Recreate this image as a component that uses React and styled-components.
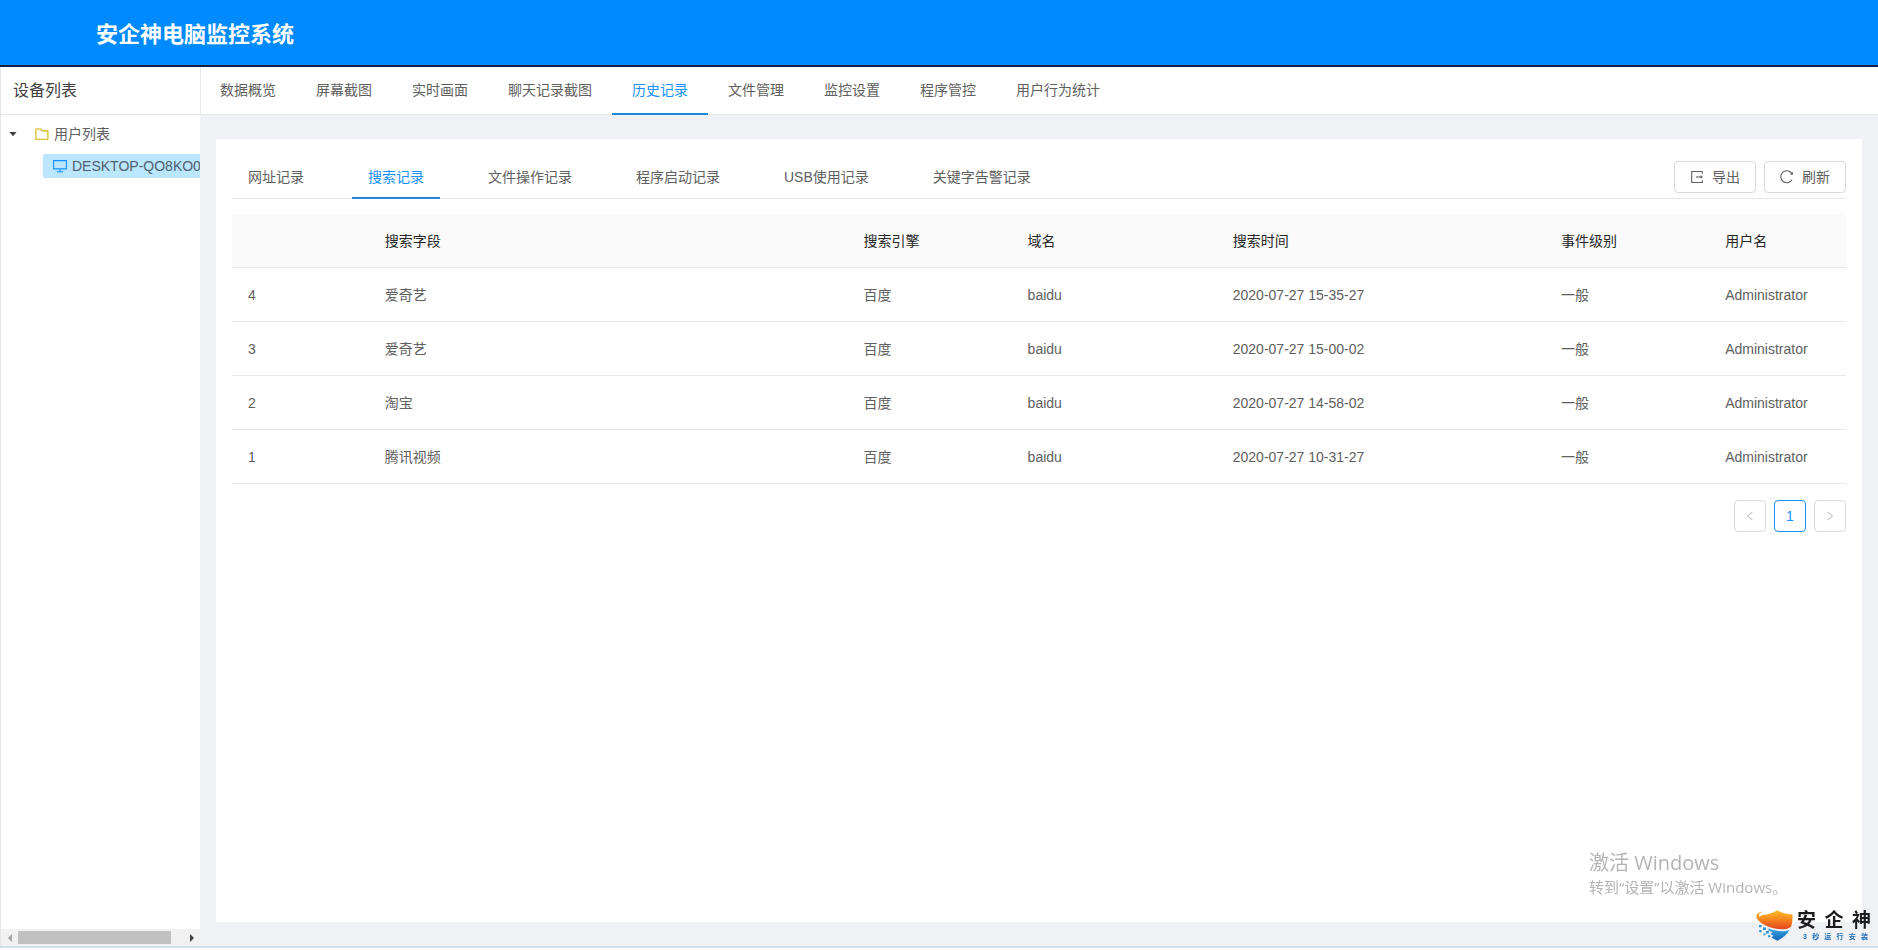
import React from "react";
import styled, { createGlobalStyle, css } from "styled-components";
import {
  AiFillCaretDown,
  AiOutlineLeft,
  AiOutlineRight,
} from "react-icons/ai";

const Global = createGlobalStyle`
  *, *::before, *::after { box-sizing: border-box; }
  body {
    margin: 0;
    font-family: "Liberation Sans", "Noto Sans CJK SC", sans-serif;
    font-size: 14px;
    line-height: 22px;
    color: #606060;
    background: #fff;
  }
  button { font: inherit; color: inherit; cursor: pointer; }
  a { color: inherit; text-decoration: none; }
  svg { display: block; flex: none; }
`;

const Page = styled.div`
  display: flex;
  flex-direction: column;
  min-height: 100vh;
`;

const Header = styled.header`
  display: flex;
  align-items: center;
  height: 67px;
  padding: 0 96px;
  background: #008aff;
  border-bottom: 2px solid #06224f;
`;

const AppTitle = styled.h1`
  margin: 0;
  padding-top: 4px;
  font-size: 22px;
  line-height: 32px;
  font-weight: 700;
  color: #fff;
`;

const Body = styled.div`
  display: flex;
  flex: 1;
  border-left: 1px solid #e4e6e8;
`;

const Sidebar = styled.aside`
  display: flex;
  flex-direction: column;
  flex: none;
  width: 199px;
  overflow: hidden;
  background: #fff;
`;

const SidebarTitle = styled.h2`
  margin: 0;
  height: 48px;
  padding: 0 12px;
  border-bottom: 1px solid #e6e8ea;
  font-size: 16px;
  line-height: 47px;
  font-weight: 400;
  color: #404040;
`;

const Tree = styled.ul`
  flex: 1;
  margin: 0;
  padding: 7px 0 0;
  list-style: none;
`;

const TreeGroup = styled.ul`
  margin: 0;
  padding: 8px 0 0 42px;
  list-style: none;
`;

const TreeToggle = styled.button`
  display: flex;
  align-items: center;
  height: 24px;
  padding: 0 0 0 7px;
  border: 0;
  background: none;
  white-space: nowrap;
`;

const Caret = styled(AiFillCaretDown)`
  margin-right: 17px;
  font-size: 10px;
  color: #404040;
`;

const DeviceLink = styled.a`
  display: flex;
  align-items: center;
  gap: 5px;
  height: 24px;
  padding-left: 10px;
  border-radius: 2px 0 0 2px;
  background: #bae7ff;
  color: #50606c;
  white-space: nowrap;
  svg { color: #1890ff; }
`;

const ScrollBar = styled.div`
  display: flex;
  align-items: center;
  height: 17px;
  background: #f1f1f1;
`;

const ScrollArrow = styled.button`
  display: flex;
  align-items: center;
  justify-content: center;
  width: 17px;
  height: 17px;
  padding: 0;
  border: 0;
  background: none;
  color: ${(p) => (p.$dim ? "#a3a3a3" : "#404040")};
`;

const ScrollTrack = styled.div`
  flex: 1;
`;

const ScrollThumb = styled.div`
  width: 93%;
  height: 13px;
  background: #c1c1c1;
`;

const Main = styled.main`
  display: flex;
  flex-direction: column;
  flex: 1;
  min-width: 0;
  background: #eff1f5;
`;

const Nav = styled.nav`
  display: flex;
  height: 48px;
  background: #fff;
  box-shadow: inset 1px 0 #e6e8ea, inset 0 -1px #e6e8ea;
`;

const activeTab = css`
  color: #1890ff;
  border-bottom-color: #1e88dc;
`;

const NavLink = styled.a`
  padding: 0 20px;
  border-bottom: 2px solid transparent;
  line-height: 46px;
  white-space: nowrap;
  ${(p) => p.$active && activeTab}
`;

const Content = styled.div`
  display: flex;
  flex: 1;
  padding: 24px 16px;
`;

const Card = styled.section`
  flex: 1;
  min-width: 0;
  padding: 16px;
  background: #fff;
`;

const CardBar = styled.div`
  display: flex;
  justify-content: space-between;
  height: 44px;
  margin-bottom: 15px;
  box-shadow: inset 0 -1px #e8e8e8;
`;

const Tabs = styled.div`
  display: flex;
  gap: 32px;
`;

const Tab = styled.button`
  padding: 0 16px;
  border: 0;
  border-bottom: 2px solid transparent;
  background: none;
  line-height: 44px;
  white-space: nowrap;
  ${(p) => p.$active && activeTab}
`;

const Actions = styled.div`
  display: flex;
  gap: 8px;
  padding-top: 6px;
`;

const ActionButton = styled.button`
  display: flex;
  align-items: center;
  gap: 8px;
  height: 32px;
  padding: 0 15px;
  border: 1px solid #d9d9d9;
  border-radius: 4px;
  background: #fff;
  white-space: nowrap;
`;

const Table = styled.table`
  width: 100%;
  table-layout: fixed;
  border-spacing: 0;
  text-align: left;
`;

const HeadCell = styled.th`
  height: 54px;
  padding: 0 16px;
  background: #fafafa;
  border-bottom: 1px solid #e8e8e8;
  font-weight: 400;
  color: #262626;
`;

const Cell = styled.td`
  height: 54px;
  padding: 0 16px;
  border-bottom: 1px solid #e8e8e8;
  white-space: nowrap;
`;

const Pagination = styled.nav`
  display: flex;
  justify-content: flex-end;
  gap: 8px;
  padding-top: 16px;
`;

const PageButton = styled.button`
  display: flex;
  align-items: center;
  justify-content: center;
  width: 32px;
  height: 32px;
  padding: 0;
  border: 1px solid ${(p) => (p.$active ? "#1890ff" : "#d9d9d9")};
  border-radius: 4px;
  background: #fff;
  color: ${(p) => (p.$active ? "#1890ff" : "#bfbfbf")};
  svg { font-size: 12px; }
`;

const Footer = styled.footer`
  height: 4px;
  background: #fafcfe;
  border-top: 2px solid #d2e1e9;
`;

const ActivationNotice = styled.aside`
  position: fixed;
  right: 84px;
  bottom: 52px;
  width: 205px;
  font-family: "Open Sans", "Noto Sans CJK SC", sans-serif;
  color: #b4b4b4;
  white-space: nowrap;
  pointer-events: none;
`;

const NoticeTitle = styled.p`
  margin: 0;
  font-size: 20px;
  line-height: 26px;
`;

const NoticeText = styled.p`
  margin: 0;
  font-size: 15px;
  line-height: 22px;
`;

const Brand = styled.div`
  position: fixed;
  right: 7px;
  bottom: 9px;
  display: flex;
  align-items: center;
  gap: 4px;
  font-weight: 700;
`;

const BrandText = styled.div`
  display: flex;
  flex-direction: column;
  width: 74px;
`;

const Spread = styled.div`
  display: flex;
  justify-content: space-between;
`;

const BrandName = styled(Spread)`
  font-size: 19px;
  line-height: 22px;
  color: #1c1c1c;
`;

const BrandSlogan = styled(Spread)`
  padding: 0 3px 0 6px;
  font-size: 7px;
  line-height: 9px;
  color: #1f6fb8;
`;

const NAV = ["数据概览", "屏幕截图", "实时画面", "聊天记录截图", "历史记录", "文件管理", "监控设置", "程序管控", "用户行为统计"];
const TABS = ["网址记录", "搜索记录", "文件操作记录", "程序启动记录", "USB使用记录", "关键字告警记录"];
const COLUMNS = [
  ["", 100],
  ["搜索字段", 350],
  ["搜索引擎", 120],
  ["域名", 150],
  ["搜索时间", 240],
  ["事件级别", 120],
  ["用户名", 100],
];
const ROWS = [
  ["4", "爱奇艺", "百度", "baidu", "2020-07-27 15-35-27", "一般", "Administrator"],
  ["3", "爱奇艺", "百度", "baidu", "2020-07-27 15-00-02", "一般", "Administrator"],
  ["2", "淘宝", "百度", "baidu", "2020-07-27 14-58-02", "一般", "Administrator"],
  ["1", "腾讯视频", "百度", "baidu", "2020-07-27 10-31-27", "一般", "Administrator"],
];

const letters = (text) => [...text].map((ch, i) => <span key={i}>{ch}</span>);

const FolderIcon = styled.svg`
  margin-right: 5px;
  color: #d4b106;
`;

function Folder() {
  return (
    <FolderIcon width="14" height="14" viewBox="0 0 14 14" fill="none" stroke="currentColor" strokeWidth="1.1" aria-hidden="true">
      <path d="M.9 2h4.600l1.700 1.900h5.700v8.300H.9z" />
    </FolderIcon>
  );
}

function Desktop() {
  return (
    <svg width="14" height="14" viewBox="0 0 14 14" fill="none" stroke="currentColor" strokeWidth="1.1" aria-hidden="true">
      <path d="M.6 1.600h12.800v8.300H.6z" />
      <path d="M7 10v2.400M3.800 12.700h6.400" />
    </svg>
  );
}

function Export() {
  return (
    <svg width="14" height="14" viewBox="0 0 14 14" fill="none" stroke="currentColor" strokeWidth="1.100" aria-hidden="true">
      <path d="M12.300 3.800V1.500H1.700v11h10.600v-2.300" />
      <path d="M6 7h5.500" />
      <path d="M10.600 5.200 13 7l-2.400 1.800z" fill="currentColor" stroke="none" />
    </svg>
  );
}

function Reload() {
  return (
    <svg width="14" height="14" viewBox="0 0 14 14" fill="none" stroke="currentColor" strokeWidth="1.100" aria-hidden="true">
      <path d="M12 9.700A6 6 0 1 1 11.600 3.200" />
      <path d="M12.900 1.700v3.200L9.800 4.200z" fill="currentColor" stroke="none" />
    </svg>
  );
}

function Shield() {
  return (
    <svg width="37" height="31" viewBox="0 0 37 31" aria-hidden="true">
      <defs>
        <linearGradient id="flame" x1="0" y1="0" x2="0" y2="1">
          <stop offset="0" stopColor="#fbc02a" />
          <stop offset="0.45" stopColor="#f58a1f" />
          <stop offset="1" stopColor="#e5431f" />
        </linearGradient>
        <linearGradient id="water" x1="0" y1="0" x2="0" y2="1">
          <stop offset="0" stopColor="#35a5e6" />
          <stop offset="1" stopColor="#1464b4" />
        </linearGradient>
      </defs>
      <path
        d="M7 1.600C2.600 2.400.2 4.300.4 6.600c.3 4.500 8 9.400 17 11.600 7.500 1.800 14.600 1.300 17.600-1.500 1.400-3.600 1.600-7.800 1.500-12.300C30.800 4.200 25.600 3 21.400.3 17 2.900 12 4.500 6.600 5.100c-1.600.5-2.700 1.200-3.200 1.900C2.300 5.200 3.800 3 7 1.600Z"
        fill="url(#flame)"
      />
      <path
        d="M12.500 18.600c8 3 16 3.600 21 1.100C31.200 24.600 27 28 21.300 30.700c-2.300-1-4.200-2.100-5.900-3.400l2.200-1.500-3-1.800 2-2-4.100-1.200Z"
        fill="url(#water)"
      />
      <g fill="#2f94d8">
        <path d="M3 15h2.600v2.300H3zM7 17.500h3v2.600H7zM3.200 20h2.300v2.200H3.200zM10 21h2.800v2.500H10zM7.500 23.500h2v1.800h-2zM12 25.200h2.300v2H12z" />
      </g>
    </svg>
  );
}

function Arrow({ flip }) {
  return (
    <svg width="4" height="8" viewBox="0 0 4 8" aria-hidden="true">
      <path d={flip ? "M4 0v8L0 4z" : "M0 0v8l4-4z"} fill="currentColor" />
    </svg>
  );
}

export default function App() {
  return (
    <>
      <Global />
      <Page>
        <Header>
          <AppTitle>安企神电脑监控系统</AppTitle>
        </Header>
        <Body>
          <Sidebar>
            <SidebarTitle>设备列表</SidebarTitle>
            <Tree>
              <li>
                <TreeToggle aria-expanded="true">
                  <Caret />
                  <Folder />
                  用户列表
                </TreeToggle>
                <TreeGroup>
                  <li>
                    <DeviceLink href="#device">
                      <Desktop />
                      DESKTOP-QO8KO0
                    </DeviceLink>
                  </li>
                </TreeGroup>
              </li>
            </Tree>
            <ScrollBar>
              <ScrollArrow $dim aria-label="向左滚动">
                <Arrow flip />
              </ScrollArrow>
              <ScrollTrack>
                <ScrollThumb />
              </ScrollTrack>
              <ScrollArrow aria-label="向右滚动">
                <Arrow />
              </ScrollArrow>
            </ScrollBar>
          </Sidebar>
          <Main>
            <Nav>
              {NAV.map((label) => (
                <NavLink key={label} href="#nav" $active={label === "历史记录"}>
                  {label}
                </NavLink>
              ))}
            </Nav>
            <Content>
              <Card>
                <CardBar>
                  <Tabs role="tablist">
                    {TABS.map((label) => (
                      <Tab
                        key={label}
                        role="tab"
                        aria-selected={label === "搜索记录"}
                        $active={label === "搜索记录"}
                      >
                        {label}
                      </Tab>
                    ))}
                  </Tabs>
                  <Actions>
                    <ActionButton>
                      <Export />
                      导出
                    </ActionButton>
                    <ActionButton>
                      <Reload />
                      刷新
                    </ActionButton>
                  </Actions>
                </CardBar>
                <Table>
                  <colgroup>
                    {COLUMNS.map(([label, width]) => (
                      <col key={label} width={width} />
                    ))}
                  </colgroup>
                  <thead>
                    <tr>
                      {COLUMNS.map(([label]) => (
                        <HeadCell key={label} scope="col">
                          {label}
                        </HeadCell>
                      ))}
                    </tr>
                  </thead>
                  <tbody>
                    {ROWS.map((row) => (
                      <tr key={row[0]}>
                        {row.map((value, i) => (
                          <Cell key={i}>{value}</Cell>
                        ))}
                      </tr>
                    ))}
                  </tbody>
                </Table>
                <Pagination aria-label="分页">
                  <PageButton aria-label="上一页">
                    <AiOutlineLeft />
                  </PageButton>
                  <PageButton $active aria-current="page">
                    1
                  </PageButton>
                  <PageButton aria-label="下一页">
                    <AiOutlineRight />
                  </PageButton>
                </Pagination>
              </Card>
            </Content>
          </Main>
        </Body>
        <Footer />
      </Page>
      <ActivationNotice>
        <NoticeTitle>激活 Windows</NoticeTitle>
        <NoticeText>转到“设置”以激活 Windows。</NoticeText>
      </ActivationNotice>
      <Brand>
        <Shield />
        <BrandText>
          <BrandName>{letters("安企神")}</BrandName>
          <BrandSlogan>{letters("3秒运行安装")}</BrandSlogan>
        </BrandText>
      </Brand>
    </>
  );
}
